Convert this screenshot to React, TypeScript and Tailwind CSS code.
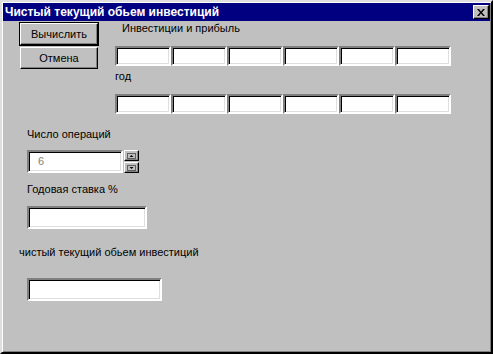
const font = { fontFamily: '"Liberation Sans", Arial, sans-serif' };

const Field = ({ className = "", children }: { className?: string; children?: React.ReactNode }) => (
  <div
    className={
      "bg-white border-2 border-t-[#808080] border-l-[#808080] border-b-white border-r-white shadow-[inset_1px_1px_0_#000,inset_-1px_-1px_0_#dfdfdf] " +
      className
    }
  >
    {children}
  </div>
);

const Button = ({ label, isDefault }: { label: string; isDefault?: boolean }) => (
  <div className={isDefault ? "border border-black" : "border border-transparent"}>
    <div className="h-[22px] bg-[#c0c0c0] border border-t-white border-l-white border-b-black border-r-black shadow-[inset_-1px_-1px_0_#808080] flex items-center justify-center text-[11px] text-black">
      {label}
    </div>
  </div>
);

const SpinBtn = ({ up }: { up?: boolean }) => (
  <div className="w-[15px] h-[11px] bg-[#c0c0c0] border border-t-white border-l-white border-b-black border-r-black shadow-[inset_-1px_-1px_0_#808080] flex items-center justify-center">
    <svg width="9" height="6" viewBox="0 0 9 6">
      <rect x="0.5" y="0.5" width="8" height="5" fill="none" stroke="#000" strokeWidth="1" strokeDasharray="1 1" />
      {up ? <path d="M2.5 4h4L4.5 2z" fill="#000" /> : <path d="M2.5 2h4L4.5 4z" fill="#000" />}
    </svg>
  </div>
);

const Row = () => (
  <div className="flex">
    {[0, 1, 2, 3, 4, 5].map((i) => (
      <Field key={i} className="w-[56px] h-[20px]" />
    ))}
  </div>
);

export default function App() {
  return (
    <div style={font} className="w-[493px] h-[354px] bg-[#c0c0c0] border-2 border-t-[#dfdfdf] border-l-[#dfdfdf] border-b-black border-r-black shadow-[inset_1px_1px_0_#fff,inset_-1px_-1px_0_#808080] flex flex-col">
      <div className="h-[18px] bg-[#000080] flex items-center justify-between pl-[2px] pr-[1px] mx-[1px] mt-[1px] -mb-[1px]">
        <span className="text-white font-bold text-[12px] leading-none">Чистый текущий обьем инвестиций</span>
        <div className="w-[16px] h-[14px] bg-[#c0c0c0] border border-t-white border-l-white border-b-black border-r-black shadow-[inset_-1px_-1px_0_#808080] flex items-center justify-center">
          <svg width="8" height="7" viewBox="0 0 8 7">
            <path d="M0 0h2l2 2.5L6 0h2L5 3.5 8 7H6L4 4.5 2 7H0l3-3.5z" fill="#000" />
          </svg>
        </div>
      </div>

      <div className="flex flex-col text-[11px] text-black">
        <div className="flex">
          <div className="ml-[17px] mt-[2px] w-[80px] flex flex-col">
            <Button label="Вычислить" isDefault />
            <Button label="Отмена" />
          </div>
          <div className="ml-[16px] flex flex-col">
            <div className="mt-[1px] pl-[7px] leading-[14px]">Инвестиции и прибыль</div>
            <div className="mt-[11px]">
              <Row />
            </div>
            <div className="mt-[3px] leading-[14px]">год</div>
            <div className="mt-[11px]">
              <Row />
            </div>
          </div>
        </div>

        <div className="pl-[25px] flex flex-col">
          <div className="mt-[13px] leading-[14px]">Число операций</div>
          <div className="mt-[9px] flex items-start">
            <Field className="w-[96px] h-[23px] flex items-center pl-[9px] text-[#808080]">6</Field>
            <div className="ml-[1px] flex flex-col">
              <SpinBtn up />
              <div className="mt-px">
                <SpinBtn />
              </div>
            </div>
          </div>
          <div className="mt-[9px] leading-[14px]">Годовая ставка %</div>
          <Field className="mt-[10px] w-[120px] h-[23px]" />
        </div>

        <div className="pl-[17px] mt-[16px] leading-[14px]">чистый текущий обьем инвестиций</div>
        <div className="pl-[25px] mt-[19px]">
          <Field className="w-[135px] h-[23px]" />
        </div>
      </div>
    </div>
  );
}
